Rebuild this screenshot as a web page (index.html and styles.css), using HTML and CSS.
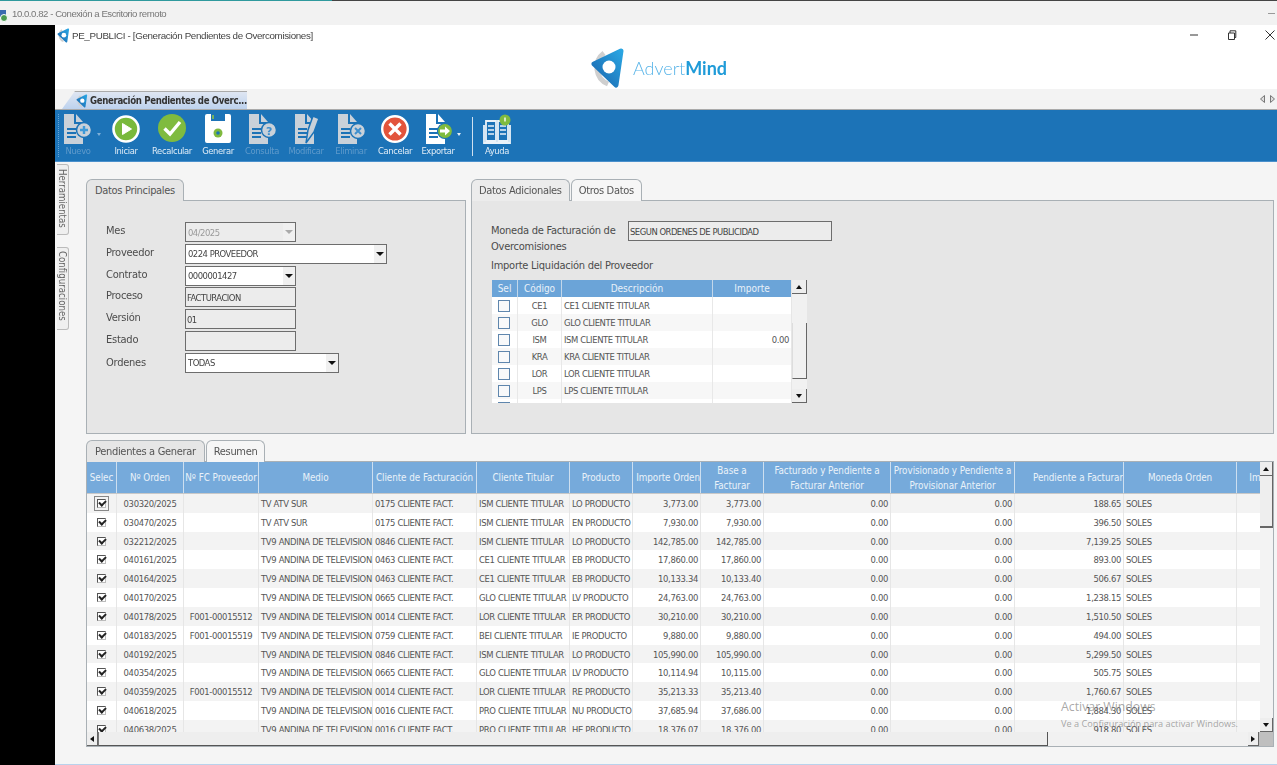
FILE: index.html
```html
<!DOCTYPE html>
<html lang="es">
<head>
<meta charset="utf-8">
<title>PE_PUBLICI - Generación Pendientes de Overcomisiones</title>
<link rel="stylesheet" href="styles.css">
</head>
<body>
<svg class="defs" width="0" height="0" aria-hidden="true">
  <defs>
    <linearGradient id="lg" x1="0" y1="1" x2="1" y2="0">
      <stop offset="0" stop-color="#1a66ae"/>
      <stop offset="1" stop-color="#2aa5e2"/>
    </linearGradient>
    <symbol id="mark" viewBox="0 0 36 40">
      <path d="M14 5A18 18 0 0 0 18 36" fill="none" stroke="#cfcfcf" stroke-width="5"/>
      <path d="M31 3 L4 16 L26 37 Z" fill="url(#lg)" stroke="url(#lg)" stroke-width="5" stroke-linejoin="round"/>
      <circle cx="19" cy="19" r="6.5" fill="#fff"/>
    </symbol>
    <symbol id="doc" viewBox="0 0 32 32">
      <path d="M0 0H10V10H19V30H0Z" fill="currentColor"/>
      <path d="M12 0L19 8H12Z" fill="currentColor"/>
      <path d="M3 15H12M3 19H12M3 23H12" stroke="#1c73b7" stroke-width="2"/>
    </symbol>
  </defs>
</svg>

<div class="screen">
<header class="rdp-title">
  <svg class="rdp-icon" width="10" height="12" viewBox="0 0 10 12"><rect x="0" y="0" width="6" height="7" fill="#3a6ab0"/><circle cx="4" cy="8" r="3.5" fill="#4b9a52" stroke="#fff"/></svg>
  <span>10.0.0.82 - Conexión a Escritorio remoto</span>
  <i class="rdp-min"></i>
</header>

<div class="rdp-body">
  <div class="black"></div>
  <div class="app">
    <div class="app-head">
      <div class="title-row">
        <svg class="mini-mark" width="13" height="15"><use href="#mark"/></svg>
        <span>PE_PUBLICI - [Generación Pendientes de Overcomisiones]</span>
        <div class="win-btns">
          <svg width="10" height="10" viewBox="0 0 10 10"><path d="M1 5H9" stroke="#333"/></svg>
          <svg width="10" height="10" viewBox="0 0 10 10"><path d="M1.5 3H7.5V9.5H1.5ZM3 3V.8H8.8V7.5H7.5" fill="none" stroke="#333"/></svg>
          <svg width="10" height="10" viewBox="0 0 10 10"><path d="M.5 .5L9.5 9.5M9.5 .5L.5 9.5" stroke="#333"/></svg>
        </div>
      </div>
      <div class="logo-row">
        <svg class="logo-mark" width="36" height="40"><use href="#mark"/></svg>
        <span class="logo-text">Advert<b>Mind</b></span>
      </div>
    </div>

    <div class="doc-tabs">
      <div class="doc-tab">
        <svg width="12" height="14"><use href="#mark"/></svg>
        <span>Generación Pendientes de Overc...</span>
      </div>
      <div class="doc-nav">
        <svg width="5" height="8" viewBox="0 0 5 8"><path d="M4.5 .5V7.5L.5 4Z" fill="#ddd" stroke="#777"/></svg>
        <svg width="5" height="8" viewBox="0 0 5 8"><path d="M.5 .5V7.5L4.5 4Z" fill="#ddd" stroke="#777"/></svg>
      </div>
    </div>

    <nav class="toolbar">
      <div class="tool off">
        <svg class="ti" viewBox="-2 0 32 32"><use href="#doc" width="32" height="32"/><circle cx="20" cy="16" r="7.5" fill="currentColor" stroke="#1c73b7" stroke-width="1.5"/><path d="M20 12V20M16 16H24" stroke="#3f9ad8" stroke-width="2.4"/></svg>
        <span>Nuevo</span><i class="caret dim"></i>
      </div>
      <div class="tool">
        <svg class="ti" viewBox="0 0 32 32"><circle cx="16" cy="15" r="12.5" fill="#79b93c" stroke="#fff" stroke-width="2.6"/><path d="M12.5 9.5L21.5 15L12.5 20.5Z" fill="#fff" stroke="#fff" stroke-linejoin="round"/></svg>
        <span>Iniciar</span>
      </div>
      <div class="tool">
        <svg class="ti" viewBox="0 0 32 32"><circle cx="16" cy="14" r="14" fill="#7fbb3f"/><path d="M8.5 14.5L14 20L24 8" fill="none" stroke="#fff" stroke-width="3.4"/></svg>
        <span>Recalcular</span>
      </div>
      <div class="tool">
        <svg class="ti" viewBox="0 0 32 32"><path d="M3 2Q3 0 5 0H9V7H23V0H27Q29 0 29 2V27Q29 29 27 29H5Q3 29 3 27Z" fill="#fff"/><path d="M11 1V5" stroke="#8cc04a" stroke-width="1.6"/><circle cx="16" cy="19" r="4.5" fill="#7fb93e"/><circle cx="16" cy="19" r="1.8" fill="#1c73b7"/></svg>
        <span>Generar</span>
      </div>
      <div class="tool off">
        <svg class="ti" viewBox="-3 0 32 32"><use href="#doc" width="32" height="32"/><circle cx="20" cy="16" r="7.5" fill="currentColor" stroke="#1c73b7" stroke-width="1.5"/><text x="20" y="20.5" class="qm">?</text></svg>
        <span>Consulta</span>
      </div>
      <div class="tool off">
        <svg class="ti" viewBox="-5 0 32 32"><use href="#doc" width="32" height="32"/><path d="M11 29L13 16L18 2L24 4.5L19 18Z" fill="currentColor" stroke="#1c73b7" stroke-width="1.5"/></svg>
        <span>Modificar</span>
      </div>
      <div class="tool off">
        <svg class="ti" viewBox="-3 0 32 32"><use href="#doc" width="32" height="32"/><circle cx="20" cy="17" r="7.5" fill="currentColor" stroke="#1c73b7" stroke-width="1.5"/><path d="M17 14L23 20M23 14L17 20" stroke="#3f8fce" stroke-width="2"/></svg>
        <span>Eliminar</span>
      </div>
      <div class="tool">
        <svg class="ti" viewBox="0 0 32 32"><circle cx="16" cy="15" r="12.8" fill="#e2543c" stroke="#fff" stroke-width="2.4"/><path d="M10.5 9.5L21.5 20.5M21.5 9.5L10.5 20.5" stroke="#fff" stroke-width="3.4"/></svg>
        <span>Cancelar</span>
      </div>
      <div class="tool white">
        <svg class="ti" viewBox="-4 0 32 32"><use href="#doc" width="32" height="32"/><circle cx="19" cy="17" r="7.5" fill="#7fbb3f" stroke="#1c73b7" stroke-width="1.2"/><path d="M14 15.5H19V12.5L24 17L19 21.5V18.5H14Z" fill="#fff"/></svg>
        <span>Exportar</span><i class="caret"></i>
      </div>
      <div class="tool-sep"></div>
      <div class="tool">
        <svg class="ti" viewBox="0 0 32 32"><path d="M5 7H15V27H5ZM17 7H27V27H17ZM3 11V29H29V11" fill="none" stroke="#eaf2f9" stroke-width="1.8"/><path d="M7 12H13M7 16H13M7 20H13M19 12H25M19 16H25M19 20H25" stroke="#eaf2f9" stroke-width="1.4"/><circle cx="24" cy="6" r="5.5" fill="#7fbb3f"/><path d="M24 3.5V7.5" stroke="#fff" stroke-width="1.4"/></svg>
        <span>Ayuda</span>
      </div>
    </nav>

    <div class="work">
      <aside class="rail">
        <div class="rail-tab rail-a">Herramientas</div>
        <div class="rail-tab rail-b">Configuraciones</div>
      </aside>

      <main class="panels">
        <div class="top-row">
          <section class="pane pane-left">
            <div class="tabs"><div class="tab on">Datos Principales</div></div>
            <div class="pane-body form">
              <label>Mes</label>
              <div class="field w110 ro"><span class="dim-text">04/2025</span><i class="dd dd-dim"></i></div>
              <label>Proveedor</label>
              <div class="field w201 wh"><span>0224 PROVEEDOR</span><i class="dd"></i></div>
              <label>Contrato</label>
              <div class="field w110 wh"><span>0000001427</span><i class="dd"></i></div>
              <label>Proceso</label>
              <div class="field w110 ro"><span class="tight">FACTURACION</span></div>
              <label>Versión</label>
              <div class="field w110 ro"><span class="tight">01</span></div>
              <label>Estado</label>
              <div class="field w110 ro"></div>
              <label class="lb-last">Ordenes</label>
              <div class="field w153 wh"><span>TODAS</span><i class="dd"></i></div>
            </div>
          </section>

          <section class="pane pane-right">
            <div class="tabs"><div class="tab off-tab">Datos Adicionales</div><div class="tab lite">Otros Datos</div></div>
            <div class="pane-body otros">
              <div class="moneda">
                <p class="lbl">Moneda de Facturación de Overcomisiones</p>
                <div class="field w204 ro"><span class="tight">SEGUN ORDENES DE PUBLICIDAD</span></div>
              </div>
              <p class="lbl imp">Importe Liquidación del Proveedor</p>
              <div class="mini">
                <div class="mini-view">
                  <div class="mrow mhead"><div>Sel</div><div>Código</div><div>Descripción</div><div>Importe</div></div>
                  <div class="mrow"><div><i class="box"></i></div><div>CE1</div><div class="l">CE1 CLIENTE TITULAR</div><div></div></div>
                  <div class="mrow"><div><i class="box"></i></div><div>GLO</div><div class="l">GLO CLIENTE TITULAR</div><div></div></div>
                  <div class="mrow"><div><i class="box"></i></div><div>ISM</div><div class="l">ISM CLIENTE TITULAR</div><div class="r">0.00</div></div>
                  <div class="mrow"><div><i class="box"></i></div><div>KRA</div><div class="l">KRA CLIENTE TITULAR</div><div></div></div>
                  <div class="mrow"><div><i class="box"></i></div><div>LOR</div><div class="l">LOR CLIENTE TITULAR</div><div></div></div>
                  <div class="mrow"><div><i class="box"></i></div><div>LPS</div><div class="l">LPS CLIENTE TITULAR</div><div></div></div>
                  <div class="mrow"><div><i class="box"></i></div><div></div><div></div><div></div></div>
                </div>
                <div class="mini-sb">
                  <div class="sb-btn"><i class="up"></i></div>
                  <div class="mini-track"><div class="mini-thumb"></div></div>
                  <div class="sb-btn"><i class="down"></i></div>
                </div>
              </div>
            </div>
          </section>
        </div>

        <section class="pane pane-bottom">
          <div class="tabs"><div class="tab on">Pendientes a Generar</div><div class="tab lite">Resumen</div></div>
          <div class="grid-wrap">
            <div class="grid-top">
              <div class="grid-view">
                <div class="tr th">
                  <div>Selec</div><div>Nº Orden</div><div>Nº FC Proveedor</div><div>Medio</div><div>Cliente de Facturación</div><div>Cliente Titular</div><div>Producto</div><div>Importe Orden</div><div>Base a Facturar</div><div>Facturado y Pendiente a Facturar Anterior</div><div>Provisionado y Pendiente a Provisionar Anterior</div><div>Pendiente a Facturar</div><div>Moneda Orden</div><div>Importe</div>
                </div>
                <div class="tr"><div><i class="chk focus"></i></div><div>030320/2025</div><div></div><div>TV ATV SUR</div><div>0175 CLIENTE FACT.</div><div>ISM CLIENTE TITULAR</div><div>LO PRODUCTO</div><div>3,773.00</div><div>3,773.00</div><div>0.00</div><div>0.00</div><div>188.65</div><div>SOLES</div><div></div></div>
                <div class="tr"><div><i class="chk"></i></div><div>030470/2025</div><div></div><div>TV ATV SUR</div><div>0175 CLIENTE FACT.</div><div>ISM CLIENTE TITULAR</div><div>EN PRODUCTO</div><div>7,930.00</div><div>7,930.00</div><div>0.00</div><div>0.00</div><div>396.50</div><div>SOLES</div><div></div></div>
                <div class="tr"><div><i class="chk"></i></div><div>032212/2025</div><div></div><div>TV9 ANDINA DE TELEVISION</div><div>0846 CLIENTE FACT.</div><div>ISM CLIENTE TITULAR</div><div>LO PRODUCTO</div><div>142,785.00</div><div>142,785.00</div><div>0.00</div><div>0.00</div><div>7,139.25</div><div>SOLES</div><div></div></div>
                <div class="tr"><div><i class="chk"></i></div><div>040161/2025</div><div></div><div>TV9 ANDINA DE TELEVISION</div><div>0463 CLIENTE FACT.</div><div>CE1 CLIENTE TITULAR</div><div>EB PRODUCTO</div><div>17,860.00</div><div>17,860.00</div><div>0.00</div><div>0.00</div><div>893.00</div><div>SOLES</div><div></div></div>
                <div class="tr"><div><i class="chk"></i></div><div>040164/2025</div><div></div><div>TV9 ANDINA DE TELEVISION</div><div>0463 CLIENTE FACT.</div><div>CE1 CLIENTE TITULAR</div><div>EB PRODUCTO</div><div>10,133.34</div><div>10,133.40</div><div>0.00</div><div>0.00</div><div>506.67</div><div>SOLES</div><div></div></div>
                <div class="tr"><div><i class="chk"></i></div><div>040170/2025</div><div></div><div>TV9 ANDINA DE TELEVISION</div><div>0665 CLIENTE FACT.</div><div>GLO CLIENTE TITULAR</div><div>LV PRODUCTO</div><div>24,763.00</div><div>24,763.00</div><div>0.00</div><div>0.00</div><div>1,238.15</div><div>SOLES</div><div></div></div>
                <div class="tr"><div><i class="chk"></i></div><div>040178/2025</div><div>F001-00015512</div><div>TV9 ANDINA DE TELEVISION</div><div>0014 CLIENTE FACT.</div><div>LOR CLIENTE TITULAR</div><div>ER PRODUCTO</div><div>30,210.00</div><div>30,210.00</div><div>0.00</div><div>0.00</div><div>1,510.50</div><div>SOLES</div><div></div></div>
                <div class="tr"><div><i class="chk"></i></div><div>040183/2025</div><div>F001-00015519</div><div>TV9 ANDINA DE TELEVISION</div><div>0759 CLIENTE FACT.</div><div>BEI CLIENTE TITULAR</div><div>IE PRODUCTO</div><div>9,880.00</div><div>9,880.00</div><div>0.00</div><div>0.00</div><div>494.00</div><div>SOLES</div><div></div></div>
                <div class="tr"><div><i class="chk"></i></div><div>040192/2025</div><div></div><div>TV9 ANDINA DE TELEVISION</div><div>0846 CLIENTE FACT.</div><div>ISM CLIENTE TITULAR</div><div>LO PRODUCTO</div><div>105,990.00</div><div>105,990.00</div><div>0.00</div><div>0.00</div><div>5,299.50</div><div>SOLES</div><div></div></div>
                <div class="tr"><div><i class="chk"></i></div><div>040354/2025</div><div></div><div>TV9 ANDINA DE TELEVISION</div><div>0665 CLIENTE FACT.</div><div>GLO CLIENTE TITULAR</div><div>LV PRODUCTO</div><div>10,114.94</div><div>10,115.00</div><div>0.00</div><div>0.00</div><div>505.75</div><div>SOLES</div><div></div></div>
                <div class="tr"><div><i class="chk"></i></div><div>040359/2025</div><div>F001-00015512</div><div>TV9 ANDINA DE TELEVISION</div><div>0014 CLIENTE FACT.</div><div>LOR CLIENTE TITULAR</div><div>RE PRODUCTO</div><div>35,213.33</div><div>35,213.40</div><div>0.00</div><div>0.00</div><div>1,760.67</div><div>SOLES</div><div></div></div>
                <div class="tr"><div><i class="chk"></i></div><div>040618/2025</div><div></div><div>TV9 ANDINA DE TELEVISION</div><div>0016 CLIENTE FACT.</div><div>PRO CLIENTE TITULAR</div><div>NU PRODUCTO</div><div>37,685.94</div><div>37,686.00</div><div>0.00</div><div>0.00</div><div>1,884.30</div><div>SOLES</div><div></div></div>
                <div class="tr"><div><i class="chk"></i></div><div>040638/2025</div><div></div><div>TV9 ANDINA DE TELEVISION</div><div>0016 CLIENTE FACT.</div><div>PRO CLIENTE TITULAR</div><div>HE PRODUCTO</div><div>18,376.07</div><div>18,376.00</div><div>0.00</div><div>0.00</div><div>918.80</div><div>SOLES</div><div></div></div>
              </div>
              <div class="vsb">
                <div class="sb-btn"><i class="up"></i></div>
                <div class="v-track"><div class="v-thumb"></div></div>
                <div class="sb-btn"><i class="down"></i></div>
              </div>
            </div>
            <div class="hsb">
              <div class="sb-btn h"><i class="left"></i></div>
              <div class="h-track"><div class="h-thumb"></div></div>
              <div class="sb-btn h"><i class="right"></i></div>
              <div class="corner"></div>
            </div>
          </div>
        </section>
      </main>
    </div>
    <div class="watermark">
      <div class="wm-a">Activar Windows</div>
      <div class="wm-b">Ve a Configuración para activar Windows.</div>
    </div>
  </div>
</div>
</div>
</body>
</html>
```

FILE: styles.css
```css
* { box-sizing: border-box; }
html, body { margin: 0; padding: 0; }
body {
  width: 1277px;
  height: 765px;
  overflow: hidden;
  background: #f4f4f4;
  font-family: "DejaVu Sans Condensed", "DejaVu Sans", sans-serif;
  font-size: 10px;
  color: #555;
}
.screen { height: 765px; filter: blur(.35px); }
.defs { position: absolute; }
p { margin: 0; }

/* remote desktop title */
.rdp-title {
  height: 25px;
  display: flex;
  align-items: center;
  gap: 2px;
  padding-top: 1px;
  background: #f2f2f2;
  border-top: 1px solid #3d4a52;
  border-image: linear-gradient(90deg, #2f9a9e 0, #2f9a9e 26%, #444 26%, #444 100%) 1;
  color: #777;
  font-family: "Liberation Sans", sans-serif;
  font-size: 9.6px;
  letter-spacing: -.45px;
  white-space: nowrap;
}
.rdp-icon { margin-top: 4px; flex: none; }
.rdp-min { margin-left: auto; width: 7px; height: 1px; background: #999; margin-right: 2px; }

.rdp-body { display: flex; height: 740px; }
.black { width: 55px; background: #000; flex: none; }
.app {
  flex: 1;
  position: relative;
  display: flex;
  flex-direction: column;
  background: #f5f5f5;
  border-bottom: 1px solid #b9d2ec;
  min-width: 0;
}

/* head */
.app-head { height: 64px; background: #fff; flex: none; }
.title-row {
  height: 20px;
  display: flex;
  align-items: center;
  gap: 2px;
  padding: 0 2px;
  color: #444;
  font-family: "Liberation Sans", sans-serif;
  font-size: 9.8px;
  letter-spacing: -.35px;
}
.win-btns { margin-left: auto; display: flex; gap: 28px; }
.logo-row {
  height: 44px;
  display: flex;
  align-items: center;
  justify-content: center;
  gap: 7px;
  padding: 2px 15px 0 0;
}
.logo-text { font-family: Lato, sans-serif; font-weight: 300; font-size: 18px; color: #58b4e8; }
.logo-text b { font-weight: 700; color: #1f9bd8; }

/* doc tabs */
.doc-tabs {
  height: 21px;
  flex: none;
  display: flex;
  align-items: flex-end;
  justify-content: space-between;
  padding-left: 7px;
  background: #f3f3f3;
  border-bottom: 1px solid #aaa;
}
.doc-tab {
  width: 185px;
  height: 18px;
  display: flex;
  align-items: center;
  gap: 2px;
  padding-left: 14px;
  background: linear-gradient(#dfe6f2, #bdd2ee);
  border-top: 1px solid #aaa;
  clip-path: polygon(13px 0, 100% 0, 100% 100%, 0 100%);
  color: #333;
  font-weight: 700;
  font-size: 9.6px;
  letter-spacing: -.36px;
  white-space: nowrap;
}
.doc-tab svg { flex: none; }
.doc-nav { display: flex; gap: 5px; align-self: center; padding-right: 2px; }

/* toolbar */
.toolbar {
  position: relative;
  height: 52px;
  flex: none;
  display: grid;
  grid-template-columns: 46px 50px 42px 50px 38px 50px 40px 48px 38px 16px 48px;
  background: #1c73b7;
  border-bottom: 1px solid #4a90cc;
}
.toolbar::before {
  content: "";
  position: absolute;
  left: 3px;
  top: 4px;
  bottom: 4px;
  border-left: 1px dotted #6aa5d6;
}
.tool {
  position: relative;
  display: flex;
  flex-direction: column;
  align-items: center;
  color: #e1edf7;
  font-size: 9.3px;
  letter-spacing: -.35px;
  white-space: nowrap;
  padding-top: 4px;
  min-width: 0;
}
.tool span { margin-top: -1px; line-height: 12px; }
.ti { width: 32px; height: 32px; flex: none; display: block; color: #c9d1d9; }
.off { color: #5f9acb; }
.off .ti { color: #c9d1d9; }
.white .ti { color: #fff; }
.qm { font-size: 11px; font-weight: 700; fill: #3f8fce; text-anchor: middle; font-family: "DejaVu Sans", sans-serif; }
.caret {
  position: absolute;
  right: -4px;
  top: 23px;
  border: 2px solid transparent;
  border-top: 3px solid #e8f0f8;
}
.caret.dim { border-top-color: #7fb0d8; right: 0; }
.tool-sep { width: 1px; margin: 7px 0 5px 15px; background: #cfe0ef; }

/* work */
.work { flex: 1; display: flex; min-height: 0; }
.rail { width: 31px; flex: none; display: flex; flex-direction: column; gap: 12px; padding: 2px 0 0 2px; }
.rail-tab {
  width: 12px;
  writing-mode: vertical-rl;
  display: flex;
  align-items: center;
  justify-content: center;
  border: 1px solid #bbb;
  border-left: 0;
  border-radius: 0 3px 3px 0;
  background: #efefef;
  color: #666;
  font-size: 9.6px;
  white-space: nowrap;
}
.rail-a { height: 71px; padding-bottom: 2px; }
.rail-b { height: 83px; padding-bottom: 6px; }

.panels { flex: 1; display: flex; flex-direction: column; gap: 6px; padding: 17px 3px 0 0; min-width: 0; }
.top-row { display: flex; gap: 5px; height: 255px; flex: none; }
.pane { display: flex; flex-direction: column; min-width: 0; }
.pane-left { width: 380px; flex: none; }
.pane-right { flex: 1; }
.pane-bottom { height: 307px; flex: none; }
.tabs { height: 22px; display: flex; flex: none; align-items: stretch; position: relative; z-index: 1; margin-bottom: -1px; }
.tab {
  display: flex;
  align-items: center;
  padding: 0 7px;
  border: 1px solid #a9b0b5;
  border-bottom: 0;
  border-radius: 6px 6px 0 0;
  background: #e6e6e6;
  color: #555;
  font-size: 11px;
  letter-spacing: -.32px;
  white-space: nowrap;
}
.tab.on { padding: 0 8px; }
.tabs .tab + .tab { margin-left: 1px; }
.off-tab { background: #ececec; }
.lite { background: #f6f6f6; }
.pane-body { flex: 1; background: #e6e6e6; border: 1px solid #a9b0b5; min-height: 0; }

/* form */
.form {
  display: grid;
  grid-template-columns: 79px max-content;
  grid-auto-rows: 20px;
  row-gap: 1.75px;
  padding: 21px 0 0 19px;
  align-items: center;
}
.form label { font-size: 11px; color: #4c4c4c; letter-spacing: -.25px; margin-top: -3px; }
.form .lb-last { margin-top: 0; }
.field {
  height: 20px;
  display: flex;
  align-items: center;
  justify-content: space-between;
  padding: 0 0 0 2px;
  border: 1px solid #6d6d6d;
  border-right-width: 1.5px;
  border-bottom-width: 1.5px;
  color: #444;
  font-size: 9.4px;
  letter-spacing: -.5px;
  overflow: hidden;
  white-space: nowrap;
}
.ro { background: #ececec; }
.wh { background: #fff; }
.w110 { width: 111px; }
.w153 { width: 154px; }
.w201 { width: 202px; }
.w204 { width: 204px; }
.tight { margin-left: -1px; }
.dim-text { color: #999; }
.dd {
  width: 12px;
  align-self: stretch;
  background: #f0f0f0;
  position: relative;
  flex: none;
}
.dd::after {
  content: "";
  position: absolute;
  left: 2px;
  top: 7px;
  border: 4px solid transparent;
  border-top: 4px solid #111;
  border-bottom: 0;
}
.dd-dim::after { border-top-color: #aaa; }

/* otros */
.otros { padding: 20px 0 0 19px; }
.lbl { font-size: 11px; line-height: 16px; color: #4c4c4c; letter-spacing: -.25px; }
.moneda { display: flex; align-items: flex-start; }
.moneda .lbl { width: 137px; padding-top: 2px; }
.imp { margin-top: 3px; height: 22px; }
.mini { display: flex; width: 315px; height: 123px; margin-left: 1px; }
.mini-view { width: 300px; overflow: hidden; background: #fff; }
.mrow {
  display: grid;
  grid-template-columns: 26px 44px 151px 79px;
  height: 17px;
  align-items: center;
  font-size: 9.4px;
  letter-spacing: -.38px;
  color: #555;
  text-align: center;
}
.mrow:nth-child(odd) { background: #f7f7f7; }
.mrow > div { height: 100%; display: flex; align-items: center; justify-content: center; border-right: 1px solid #e8e8e8; white-space: nowrap; }
.mrow > .l { justify-content: flex-start; padding-left: 2px; }
.mrow > .r { justify-content: flex-end; padding-right: 2px; }
.mhead { background: #6ba4d8 !important; color: #e9f1f8; font-size: 10px; letter-spacing: 0; height: 17px; }
.mhead > div { border-right: 1px solid #c2d7ea; }
.box { width: 12px; height: 12px; margin-left: -2px; border: 1.5px solid #5f86ad; background: #f8f9fa; display: block; }
.mini-sb { width: 15px; margin-left: 1px; display: flex; flex-direction: column; background: #f1f1f1; }
.sb-btn {
  height: 14px;
  flex: none;
  display: flex;
  align-items: center;
  justify-content: center;
  background: #eee;
  border-right: 1px solid #666;
  border-bottom: 1px solid #666;
}
.sb-btn.h { width: 11px; height: auto; }
.up, .down, .left, .right { width: 0; height: 0; border: 3px solid transparent; display: block; }
.up { border-bottom: 4px solid #111; border-top: 0; }
.down { border-top: 4px solid #111; border-bottom: 0; }
.left { border-right: 4px solid #111; border-left: 0; }
.right { border-left: 4px solid #111; border-right: 0; }
.mini-track { flex: 1; padding-top: 29px; }
.mini-thumb { height: 56px; background: #f1f1f1; border-right: 1.5px solid #666; border-bottom: 1.5px solid #666; border-left: 1px solid #ddd; }

/* big grid */
.grid-wrap {
  flex: 1;
  min-height: 0;
  display: flex;
  flex-direction: column;
  border: 1px solid #a9b0b5;
  background: #f4f4f4;
}
.grid-top { flex: 1; min-height: 0; display: flex; }
.grid-view { width: 1173px; overflow: hidden; background: #fff; flex: none; }
.tr {
  width: 1210px;
  height: 18.83px;
  display: grid;
  grid-template-columns: 30px 67px 75px 114px 104px 93px 63px 68px 63px 127px 124px 109px 113px 60px;
  font-size: 9.4px;
  letter-spacing: -.33px;
  color: #555;
  white-space: nowrap;
}
.tr:nth-child(even) { background: #f3f3f3; }
.tr > div {
  display: flex;
  align-items: center;
  border-right: 1px solid #e6e6e6;
  padding: 0 2px;
  overflow: hidden;
  min-width: 0;
}
.tr > div:nth-child(-n+3) { justify-content: center; padding: 0; }
.tr > div:nth-child(n+8):nth-child(-n+12) { justify-content: flex-end; }
.tr.th {
  height: 32px;
  background: #76aadb;
  color: #eaf2f9;
  font-size: 9.8px;
  letter-spacing: -.05px;
  line-height: 15px;
  white-space: normal;
  border-bottom: 1px solid #c8c8c8;
}
.tr.th > div {
  justify-content: center;
  text-align: center;
  padding: 0;
  border-right: 1.5px solid #cddff0;
}
.chk {
  position: relative;
  display: block;
  width: 9px;
  height: 9px;
  border: 1px solid #555;
  border-right-color: #bbb;
  border-bottom-color: #bbb;
  background: #fff;
}
.chk::after {
  content: "";
  position: absolute;
  left: 1px;
  top: 0;
  width: 5px;
  height: 3px;
  border-left: 2px solid #222;
  border-bottom: 2px solid #222;
  transform: rotate(-45deg);
}
.chk.focus { outline: 1px solid #888; outline-offset: 2px; }
.vsb { width: 13px; flex: none; display: flex; flex-direction: column; background: #f3f3f3; }
.v-track { flex: 1; }
.v-thumb { height: 52px; background: #eee; border-right: 1px solid #666; border-bottom: 2px solid #666; }
.hsb { height: 14px; flex: none; display: flex; background: #f1f1f1; }
.h-track { flex: 1; }
.h-thumb { width: 950px; height: 100%; background: #eee; border-right: 1px solid #555; border-bottom: 1.5px solid #555; border-left: 1px solid #777; }
.corner { width: 14px; background: #bfbfbf; }

/* watermark */
.watermark {
  position: absolute;
  left: 1006px;
  top: 673px;
  font-family: "Open Sans", sans-serif;
  color: rgba(120, 120, 120, .65);
  white-space: nowrap;
  pointer-events: none;
}
.wm-a { font-size: 12.3px; line-height: 18px; }
.wm-b { font-size: 9.2px; line-height: 14px; margin-top: 1px; }
```
